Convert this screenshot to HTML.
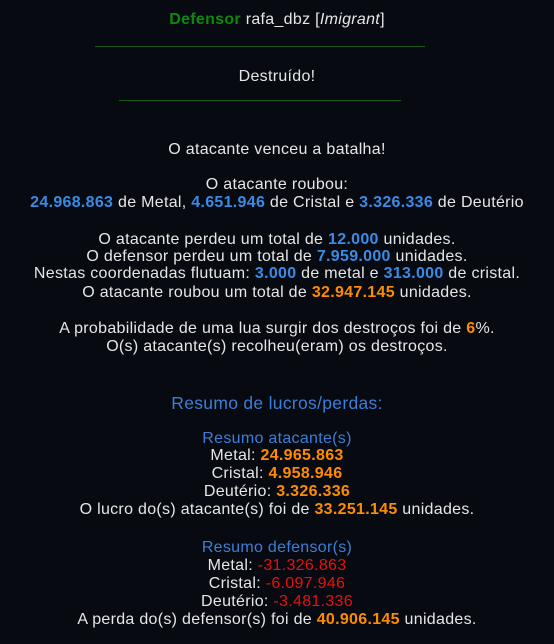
<!DOCTYPE html>
<html><head><meta charset="utf-8"><style>
html,body{margin:0;padding:0;background:#070a10;width:554px;height:644px;overflow:hidden}
body{font-family:"Liberation Sans",sans-serif;font-size:16px;letter-spacing:0.3px;color:#e6e6e6;text-align:center}
.l{position:absolute;left:0;width:554px;line-height:18px;white-space:nowrap}
b{font-weight:bold}
.g{color:#0b8a0b}.bl{color:#3a8be6}.o{color:#ff8c00}.r{color:#e81010}.h{color:#3b7fd8}
.hr{position:absolute;height:1px;background:#165a16}
</style></head><body>
<div class="l" style="top:11px"><b class="g">Defensor</b> rafa_dbz [<i>Imigrant</i>]</div>
<div class="hr" style="left:95px;width:330px;top:46px"></div>
<div class="l" style="top:68px">Destruído!</div>
<div class="hr" style="left:119px;width:282px;top:100px"></div>
<div class="l" style="top:141px">O atacante venceu a batalha!</div>
<div class="l" style="top:176px">O atacante roubou:</div>
<div class="l" style="top:194px"><b class="bl">24.968.863</b> de Metal, <b class="bl">4.651.946</b> de Cristal e <b class="bl">3.326.336</b> de Deutério</div>
<div class="l" style="top:231px">O atacante perdeu um total de <b class="bl">12.000</b> unidades.</div>
<div class="l" style="top:248px">O defensor perdeu um total de <b class="bl">7.959.000</b> unidades.</div>
<div class="l" style="top:265px">Nestas coordenadas flutuam: <b class="bl">3.000</b> de metal e <b class="bl">313.000</b> de cristal.</div>
<div class="l" style="top:284px">O atacante roubou um total de <b class="o">32.947.145</b> unidades.</div>
<div class="l" style="top:320px">A probabilidade de uma lua surgir dos destroços foi de <b class="o">6</b>%.</div>
<div class="l" style="top:338px">O(s) atacante(s) recolheu(eram) os destroços.</div>
<div class="l h" style="top:394px;font-size:17.5px">Resumo de lucros/perdas:</div>
<div class="l h" style="top:430px">Resumo atacante(s)</div>
<div class="l" style="top:447px">Metal: <b class="o">24.965.863</b></div>
<div class="l" style="top:465px">Cristal: <b class="o">4.958.946</b></div>
<div class="l" style="top:483px">Deutério: <b class="o">3.326.336</b></div>
<div class="l" style="top:501px">O lucro do(s) atacante(s) foi de <b class="o">33.251.145</b> unidades.</div>
<div class="l h" style="top:539px">Resumo defensor(s)</div>
<div class="l" style="top:557px">Metal: <span class="r">-31.326.863</span></div>
<div class="l" style="top:575px">Cristal: <span class="r">-6.097.946</span></div>
<div class="l" style="top:593px">Deutério: <span class="r">-3.481.336</span></div>
<div class="l" style="top:611px">A perda do(s) defensor(s) foi de <b class="o">40.906.145</b> unidades.</div>
</body></html>
